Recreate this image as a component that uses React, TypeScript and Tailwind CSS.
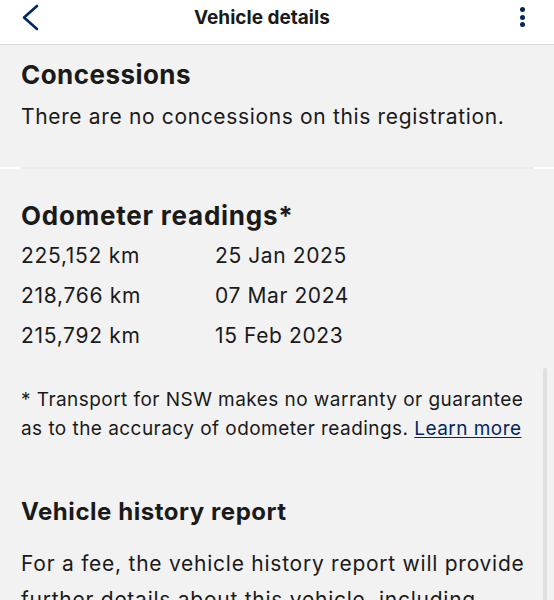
const readings = [
  { km: '225,152 km', date: '25 Jan 2025' },
  { km: '218,766 km', date: '07 Mar 2024' },
  { km: '215,792 km', date: '15 Feb 2023' },
];

export default function App() {
  return (
    <div className="relative h-[600px] w-[554px] overflow-hidden bg-[#f2f2f2] text-[#1a1a1a] font-['Inter',sans-serif]">
      {/* Header */}
      <header className="relative h-[45px] border-b border-[#d9d9d9] bg-white">
        <svg className="absolute left-[20px] top-[3px]" width="22" height="30" viewBox="0 0 22 30" fill="none">
          <polyline points="17,3 4,14.5 17,26" stroke="#002664" strokeWidth="2.6" strokeLinecap="round" strokeLinejoin="round" />
        </svg>
        <h1 className="absolute left-[194px] top-[6px] text-[19px] font-bold leading-[24px] text-[#1a1a1a]">Vehicle details</h1>
        <div className="absolute left-[520px] top-[7px] flex flex-col gap-[2.5px]">
          <span className="h-[5px] w-[5px] rounded-full bg-[#002664]" />
          <span className="h-[5px] w-[5px] rounded-full bg-[#002664]" />
          <span className="h-[5px] w-[5px] rounded-full bg-[#002664]" />
        </div>
      </header>

      {/* Concessions */}
      <section className="px-[21px] pt-[13px] pb-[35px]">
        <h2 className="text-[26px] font-bold leading-[34px] tracking-[0.45px]">Concessions</h2>
        <p className="mt-[10px] text-[21px] leading-[30px] tracking-[0.65px]">There are no concessions on this registration.</p>
      </section>

      <div className="h-[2px] bg-white">
        <div className="mx-[20px] h-[2px] bg-[#ececec]" />
      </div>

      {/* Odometer */}
      <section className="px-[21px] pt-[30px]">
        <h2 className="text-[26px] font-bold leading-[34px] tracking-[0.75px]">Odometer readings*</h2>
        <div className="mt-[3px]">
          {readings.map((r) => (
            <div key={r.km} className="flex text-[21px] leading-[40px] tracking-[0.7px]">
              <span className="w-[194px]">{r.km}</span>
              <span className="tracking-[0.6px]">{r.date}</span>
            </div>
          ))}
        </div>
        <p className="mt-[29px] text-[19px] leading-[29px] tracking-[0.45px]">
          * Transport for NSW makes no warranty or guarantee as to the accuracy of odometer readings.{' '}
          <a href="#" className="text-[#002664] underline underline-offset-2">Learn more</a>
        </p>
      </section>

      {/* Vehicle history */}
      <section className="px-[21px] pt-[53px]">
        <h2 className="text-[24px] font-bold leading-[32px] tracking-[0.55px]">Vehicle history report</h2>
        <p className="mt-[18px] text-[21px] leading-[36px] tracking-[0.75px]">
          For a fee, the vehicle history report will provide further details about this vehicle, including
        </p>
      </section>

      {/* Scrollbar */}
      <div className="absolute right-[7px] top-[368px] h-[240px] w-[4px] rounded-full bg-[#e0e0e0]" />
    </div>
  );
}
